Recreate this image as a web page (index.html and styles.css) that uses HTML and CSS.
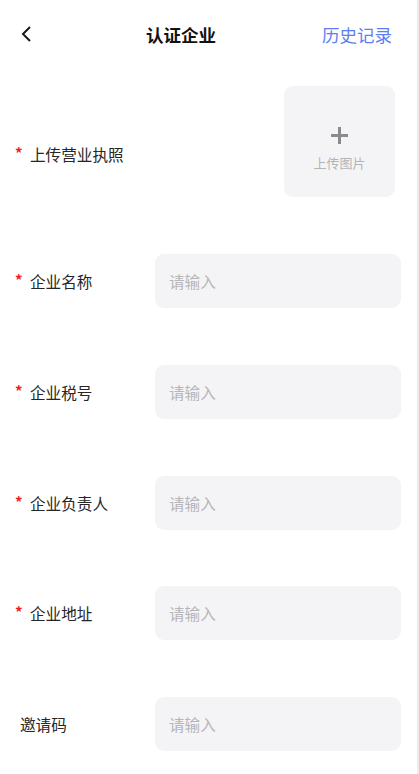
FILE: index.html
```html
<!DOCTYPE html>
<html lang="zh-CN">
<head>
    <meta charset="UTF-8">
    <meta name="viewport" content="width=device-width, initial-scale=1.0">
    <title>认证企业</title>
    <link rel="stylesheet" href="styles.css">
</head>
<body>
    <div class="page">
        <!-- Cabecera -->
        <div class="header">
            <span class="back">
                <svg width="11" height="16" viewBox="0 0 11 16">
                    <polyline points="9,1 2,8 9,15" fill="none" stroke="#1a1a1a" stroke-width="2"/>
                </svg>
            </span>
            <span class="title">认证企业</span>
            <span class="history">历史记录</span>
        </div>

        <div class="row upload-row">
            <label class="label"><span class="req">*</span>上传营业执照</label>
            <div class="upload-box">
                <span class="plus"></span>
                <span class="upload-text">上传图片</span>
            </div>
        </div>

        <div class="row">
            <label class="label"><span class="req">*</span>企业名称</label>
            <div class="input">请输入</div>
        </div>

        <div class="row">
            <label class="label"><span class="req">*</span>企业税号</label>
            <div class="input">请输入</div>
        </div>

        <div class="row">
            <label class="label"><span class="req">*</span>企业负责人</label>
            <div class="input">请输入</div>
        </div>

        <div class="row">
            <label class="label"><span class="req">*</span>企业地址</label>
            <div class="input">请输入</div>
        </div>

        <div class="row">
            <label class="label plain">邀请码</label>
            <div class="input">请输入</div>
        </div>
    </div>
</body>
</html>
```

FILE: styles.css
```css
/* Estilos generales */
body {
    margin: 0;
    padding: 0;
    background: #fff;
    font-family: "Noto Sans CJK SC", "Noto Sans", sans-serif;
    color: #333;
}

.page {
    min-height: 100vh;
    border-right: 2px solid #ececec;
    box-sizing: border-box;
}

/* Cabecera */
.header {
    height: 68px;
    display: flex;
    align-items: center;
    padding: 0 25px 0 21px;
}

.back {
    display: flex;
    width: 11px;
}

.title {
    margin-left: 114px;
    font-size: 17.5px;
    font-weight: bold;
    color: #111;
}

.history {
    margin-left: auto;
    font-size: 17.5px;
    color: #5b7ef6;
}

/* Filas del formulario */
.row {
    display: flex;
    align-items: center;
    height: 54px;
    margin-bottom: 56.75px;
    padding-right: 16px;
}

.label {
    flex: 1;
    font-size: 15.6px;
    color: #262626;
    padding-left: 15px;
    display: flex;
    align-items: center;
}

.label.plain {
    padding-left: 20px;
}

.req {
    width: 15px;
    color: #ee2222;
    font-size: 15px;
    font-weight: bold;
    align-self: flex-start;
    margin-top: -1px;
}

.input {
    width: 246px;
    height: 54px;
    box-sizing: border-box;
    background: #f4f4f6;
    border-radius: 9px;
    padding-left: 14px;
    display: flex;
    align-items: center;
    font-size: 15.6px;
    color: #b6b6b8;
}

/* Subir imagen */
.upload-row {
    height: 111px;
    margin-top: 18px;
    margin-bottom: 57px;
    padding-right: 22px;
    align-items: flex-start;
}

.upload-row .label {
    margin-top: 57px;
}

.upload-box {
    width: 111px;
    height: 111px;
    background: #f4f4f6;
    border-radius: 9px;
    display: flex;
    flex-direction: column;
    align-items: center;
}

.plus {
    position: relative;
    width: 17px;
    height: 17px;
    margin-top: 41px;
}

.plus::before,
.plus::after {
    content: "";
    position: absolute;
    background: #8a8a8c;
}

.plus::before {
    left: 0;
    top: 7px;
    width: 17px;
    height: 2.5px;
}

.plus::after {
    left: 7.25px;
    top: 0;
    width: 2.5px;
    height: 17px;
}

.upload-text {
    margin-top: 9px;
    font-size: 13px;
    color: #b4b4b6;
}
```
